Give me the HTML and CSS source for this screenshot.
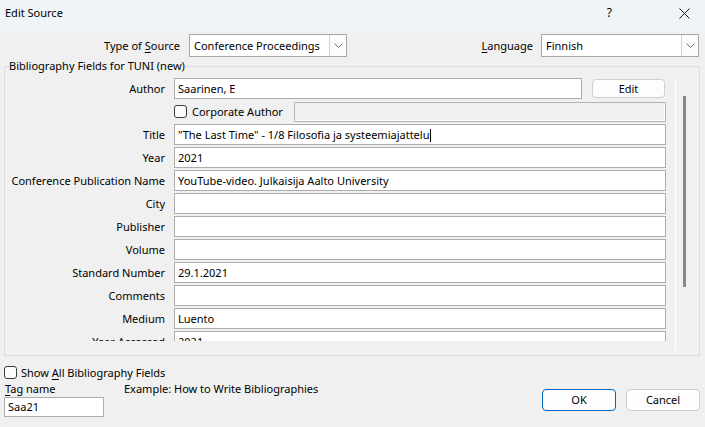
FILE: index.html
```html
<!DOCTYPE html>
<html>
<head>
<meta charset="utf-8">
<link rel="stylesheet" href="styles.css">
</head>
<body>
<div class="titlebar">
  <span class="title">Edit Source</span>
  <span class="help">?</span>
  <svg class="close" width="11" height="11" viewBox="0 0 11 11"><path d="M0.5 0.5 L10.5 10.5 M10.5 0.5 L0.5 10.5" stroke="#1a1a1a" stroke-width="1" fill="none"/></svg>
</div>
<div class="toprow">
  <span class="type-lbl">Type of <u>S</u>ource</span>
  <div class="select">
    <span class="sel-text">Conference Proceedings</span>
    <span class="arrow"><svg width="9" height="5" viewBox="0 0 9 5"><path d="M0.5 0.5 L4.5 4.5 L8.5 0.5" stroke="#6b6b6b" fill="none"/></svg></span>
  </div>
  <span class="spacer"></span>
  <span class="lang-lbl"><u>L</u>anguage</span>
  <div class="select">
    <span class="sel-text">Finnish</span>
    <span class="arrow"><svg width="9" height="5" viewBox="0 0 9 5"><path d="M0.5 0.5 L4.5 4.5 L8.5 0.5" stroke="#6b6b6b" fill="none"/></svg></span>
  </div>
</div>
<fieldset class="group">
  <legend>Bibliography Fields for TUNI (new)</legend>
  <div class="scrollarea">
    <div class="fields">
      <div class="row">
        <span class="lbl">Author</span>
        <div class="cell-author">
          <div class="input author-input">Saarinen, E</div>
          <div class="btn edit-btn">Edit</div>
        </div>
      </div>
      <div class="row">
        <span class="lbl"></span>
        <div class="cell-corp">
          <span class="check"></span>
          <span class="corp-lbl">Corporate Author</span>
          <div class="input disabled"></div>
        </div>
      </div>
      <div class="row"><span class="lbl">Title</span><div class="input">"The Last Time" - 1/8 Filosofia ja systeemiajattelu<span class="caret"></span></div></div>
      <div class="row"><span class="lbl">Year</span><div class="input">2021</div></div>
      <div class="row"><span class="lbl">Conference Publication Name</span><div class="input">YouTube-video. Julkaisija Aalto University</div></div>
      <div class="row"><span class="lbl">City</span><div class="input"></div></div>
      <div class="row"><span class="lbl">Publisher</span><div class="input"></div></div>
      <div class="row"><span class="lbl">Volume</span><div class="input"></div></div>
      <div class="row"><span class="lbl">Standard Number</span><div class="input">29.1.2021</div></div>
      <div class="row"><span class="lbl">Comments</span><div class="input"></div></div>
      <div class="row"><span class="lbl">Medium</span><div class="input">Luento</div></div>
      <div class="row"><span class="lbl">Year Accessed</span><div class="input">2021</div></div>
    </div>
    <div class="vscroll"><div class="thumb"></div></div>
  </div>
</fieldset>
<div class="bottom">
  <div class="left">
    <div class="showall"><span class="check"></span><span>Show <u>A</u>ll Bibliography Fields</span></div>
    <div class="tagrow"><span class="tag-lbl"><u>T</u>ag name</span><span>Example: How to Write Bibliographies</span></div>
    <div class="input tag-input">Saa21</div>
  </div>
  <div class="buttons">
    <div class="btn ok-btn">OK</div>
    <div class="btn">Cancel</div>
  </div>
</div>
</body>
</html>
```
FILE: styles.css
```css
* { box-sizing: border-box; }
body {
  margin: 0;
  width: 705px;
  height: 427px;
  overflow: hidden;
  background: #f0f0f0;
  font-family: "Noto Sans", "Open Sans", sans-serif;
  font-size: 11px;
  color: #000;
}
u { text-decoration: underline; text-underline-offset: 2px; }

.titlebar {
  height: 31px;
  background: #eff4f9;
  display: flex;
  align-items: center;
  padding: 0 0 7px 5px;
  font-size: 11px;
}
.title { flex: 1; }
.help { margin-right: 67px; font-size: 12px; }
.close { margin-right: 15px; margin-top: 2px; }

.toprow {
  display: flex;
  align-items: center;
  height: 23px;
  margin-top: 3px;
  padding-right: 6px;
}
.type-lbl { width: 189px; padding-right: 9px; text-align: right; }
.spacer { flex: 1; }
.lang-lbl { margin-right: 8px; }
.select {
  width: 158px;
  height: 23px;
  border: 1px solid #a6a6a6;
  background: #fff;
  display: flex;
  align-items: stretch;
}
.sel-text { flex: 1; padding-left: 4px; line-height: 21px; }
.arrow {
  width: 17px;
  border-left: 1px solid #d0d0d0;
  background: #fcfcfc;
  display: flex;
  align-items: center;
  justify-content: center;
}

.group {
  margin: 1px 5px 0 4px;
  border: 1px solid #dcdcdc;
  padding: 0 0 4px 0;
  min-width: 0;
}
.group legend {
  margin-left: 4px;
  padding: 0;
  line-height: 16px;
}
.scrollarea {
  display: flex;
  margin-top: 4px;
  height: 273px;
}
.fields {
  width: 670px;
  height: 263px;
  overflow: hidden;
}
.vscroll {
  width: 24px;
  border-left: 1px solid #fff;
}
.thumb {
  width: 3px;
  height: 191px;
  margin: 18px 0 0 7px;
  background: #878787;
}

.row {
  display: grid;
  grid-template-columns: 160px 492px;
  column-gap: 9px;
  align-items: center;
  height: 21px;
  margin-bottom: 2px;
}
.lbl { text-align: right; white-space: nowrap; }
.input {
  height: 21px;
  border: 1px solid #adadad;
  background: #fff;
  padding-left: 3px;
  line-height: 19px;
  white-space: nowrap;
  overflow: hidden;
}
.caret {
  display: inline-block;
  width: 1px;
  height: 13px;
  background: #000;
  vertical-align: -3px;
  margin-left: 1px;
}
.cell-author { display: flex; align-items: center; }
.author-input { width: 408px; }
.btn {
  height: 22px;
  width: 74px;
  border: 1px solid #d0d0d0;
  border-radius: 4px;
  background: #fdfdfd;
  text-align: center;
  line-height: 20px;
}
.edit-btn { width: 73px; height: 19px; line-height: 17px; margin-left: 10px; }
.cell-corp { display: flex; align-items: center; }
.check {
  width: 13px;
  height: 13px;
  border: 1px solid #3c3c3c;
  border-radius: 3px;
  background: #fbfbfb;
  flex: none;
}
.corp-lbl { margin-left: 5px; width: 102px; }
.disabled { width: 372px; height: 20px; background: #f0f0f0; border-color: #b4b4b4; box-shadow: inset -1px -1px 0 #fff; }

.bottom {
  display: flex;
  justify-content: space-between;
  align-items: flex-end;
  padding: 0 5px 0 4px;
  margin-top: 8px;
}
.showall { display: flex; align-items: center; height: 16px; }
.showall .check { margin-right: 4px; }
.tagrow { display: flex; height: 16px; margin-top: 1px; line-height: 16px; padding-left: 1px; }
.tag-lbl { width: 119px; }
.tag-input { width: 100px; height: 20px; line-height: 18px; }
.buttons { display: flex; gap: 10px; margin-bottom: 6px; }
.ok-btn { border-color: #0067c0; }
```
